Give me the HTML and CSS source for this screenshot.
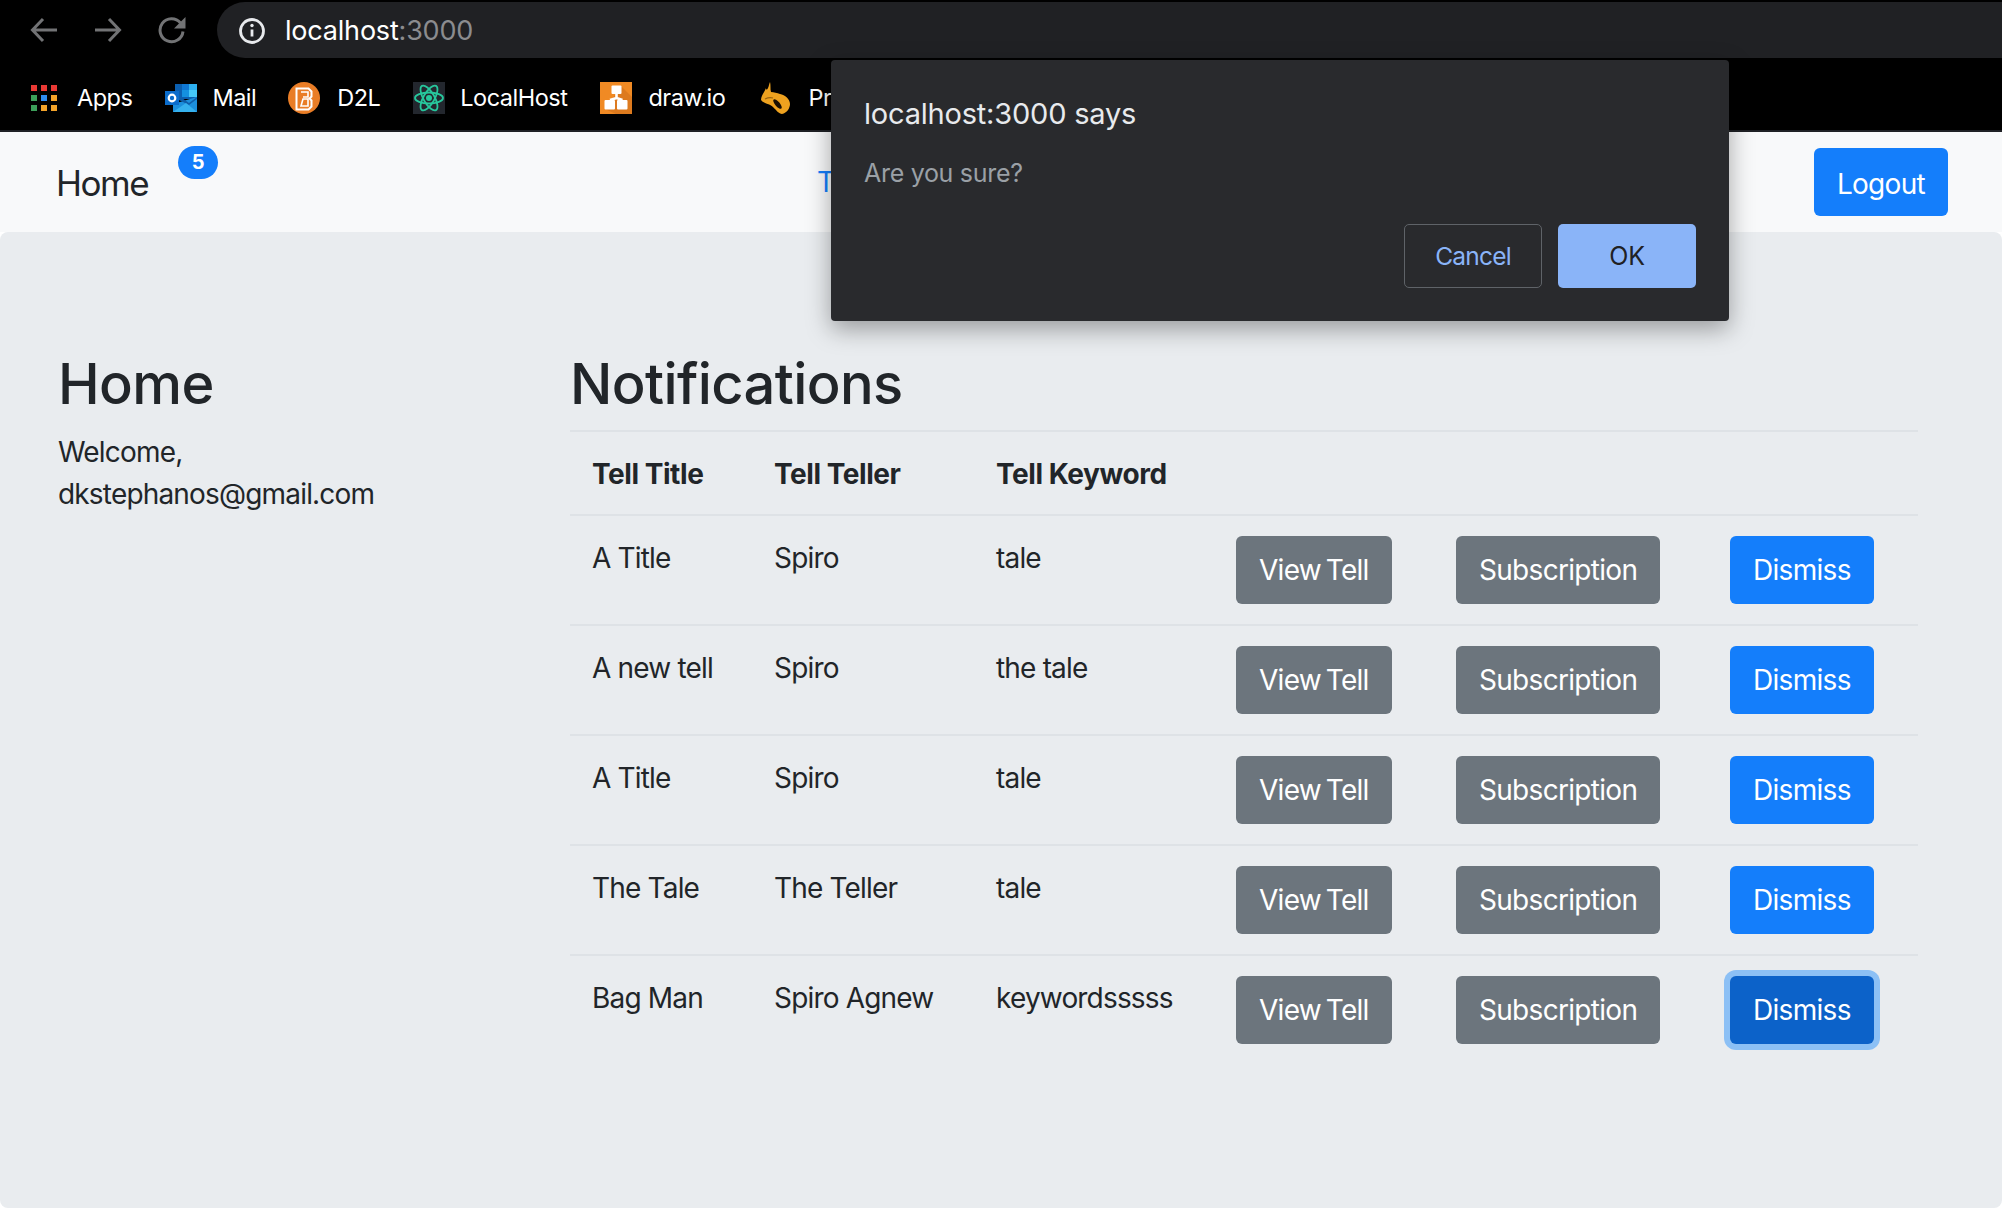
FILE: index.html
```html
<!DOCTYPE html>
<html lang="en">
<head>
    <meta charset="UTF-8">
    <meta name="viewport" content="width=device-width, initial-scale=1.0">
    <title>Home</title>
    <link rel="stylesheet" href="styles.css">
</head>
<body>
    <div class="toolbar">
        <svg class="tool-icon" viewBox="0 0 28 28"><path d="M27 14H3M13 3 2.500 14 13 25"/></svg>
        <svg class="tool-icon" viewBox="0 0 28 28"><path d="M1 14h24M15 3 25.500 14 15 25"/></svg>
        <svg class="tool-icon" viewBox="0 0 28 28"><path d="M22.500 7A11.500 11.500 0 1 0 25 15.500"/><path class="fill" d="M27.500 1v11.500H16z"/></svg>
        <div class="omnibox">
            <svg class="info-icon" viewBox="0 0 28 28"><circle cx="14" cy="14" r="11.500"/><path d="M14 12.500v7"/><circle class="dot" cx="14" cy="8.500" r="1.700"/></svg>
            <span class="url">localhost<span class="url-port">:3000</span></span>
        </div>
    </div>

    <div class="bookmarks">
        <a class="bookmark bm-apps">
            <svg viewBox="0 0 26 27">
                <rect width="6" height="6" fill="#ea3a35"/><rect x="10" width="6" height="6" fill="#ea3a35"/><rect x="20" width="6" height="6" fill="#ea3a35"/>
                <rect y="10" width="6" height="6" fill="#3c9f5a"/><rect x="10" y="10" width="6" height="6" fill="#2f8cef"/><rect x="20" y="10" width="6" height="6" fill="#f3a32a"/>
                <rect y="20" width="6" height="6" fill="#3c9f5a"/><rect x="10" y="20" width="6" height="6" fill="#f3a32a"/><rect x="20" y="20" width="6" height="6" fill="#f3a32a"/>
            </svg>
            Apps
        </a>
        <a class="bookmark bm-mail">
            <svg viewBox="0 0 32 28">
                <rect x="10" width="22" height="15" fill="#0b5fb0"/>
                <rect x="17" width="7" height="6" fill="#0f78d4"/>
                <rect x="24" width="8" height="6" fill="#2db0f0"/>
                <rect x="17" y="6" width="7" height="7" fill="#1490df"/>
                <rect x="24" y="6" width="8" height="7" fill="#45c8f8"/>
                <path d="M8 20 32 13v15H8z" fill="#1c8fdc"/>
                <path d="M10 14h7l7 5 8-6v2l-8 6z" fill="#0f5ea8"/>
                <path d="M8 28 21 19l11 9z" fill="#35b1ee"/>
                <rect y="7" width="14" height="14" fill="#0b6ccb"/>
                <circle cx="7" cy="14" r="3.300" fill="none" stroke="#fff" stroke-width="2.200"/>
            </svg>
            Mail
        </a>
        <a class="bookmark bm-d2l">
            <svg viewBox="0 0 32 32">
                <circle cx="16" cy="16" r="16" fill="#e97d26"/>
                <path d="M8.500 6.500h12l3 3v5l-2 2 2 2v6l-3 3h-12z" fill="none" stroke="#fff" stroke-width="2"/>
                <path d="M13 10h7v5h-5M15 17h5v7h-7z" fill="none" stroke="#fff" stroke-width="1.600"/>
            </svg>
            D2L
        </a>
        <a class="bookmark bm-react">
            <svg viewBox="0 0 32 32">
                <rect width="32" height="32" fill="#23272e"/>
                <g fill="none" stroke="#27c79c" stroke-width="1.800">
                    <ellipse cx="16" cy="16" rx="14" ry="5.500"/>
                    <ellipse cx="16" cy="16" rx="14" ry="5.500" transform="rotate(60 16 16)"/>
                    <ellipse cx="16" cy="16" rx="14" ry="5.500" transform="rotate(120 16 16)"/>
                </g>
                <circle cx="16" cy="16" r="3" fill="#27c79c"/>
            </svg>
            LocalHost
        </a>
        <a class="bookmark bm-draw">
            <svg viewBox="0 0 32 32">
                <rect width="32" height="32" fill="#f08a24"/>
                <path d="M21 4 32 15v17H16L5 27z" fill="#dd7a1e"/>
                <path d="M16.500 11v5L10 18M16.500 16l6 2" fill="none" stroke="#fff" stroke-width="2.600"/>
                <rect x="11.500" y="3.500" width="10" height="8.500" rx="1" fill="#fff"/>
                <rect x="4.500" y="18" width="10.500" height="9.500" rx="1" fill="#fff"/>
                <rect x="17" y="18" width="10.500" height="9.500" rx="1" fill="#fff"/>
            </svg>
            draw.io
        </a>
        <a class="bookmark bm-flame">
            <svg viewBox="0 0 30 32">
                <path d="M9 0c1 4 0 7 1 10 3 0 6 1 9 2 5 1 10 5 10 10 0 4-3 9-8 10-3 0-6-4-9-7-3-3-9-3-12-7 0-4 3-7 5-12 0 2 1 2 2 0s1-4 2-6z" fill="#eea21f"/>
                <ellipse cx="16.500" cy="22" rx="6" ry="2.400" transform="rotate(50 16.500 22)" fill="#1a0f02"/>
                <path d="M4 17c2-1 5-2 8-1" fill="none" stroke="#9a6410" stroke-width="1.200"/>
            </svg>
            Pr
        </a>
    </div>

    <nav class="navbar">
        <a class="brand">Home</a>
        <span class="badge">5</span>
        <a class="nav-link">T</a>
        <button class="btn btn-primary logout">Logout</button>
    </nav>

    <main class="jumbotron">
        <section class="sidebar">
            <h2>Home</h2>
            <p>Welcome,<br>dkstephanos@gmail.com</p>
        </section>
        <section class="notifications">
            <h2>Notifications</h2>
            <table>
                <thead>
                    <tr>
                        <th class="col-title">Tell Title</th>
                        <th class="col-teller">Tell Teller</th>
                        <th class="col-keyword">Tell Keyword</th>
                        <th class="col-view"></th>
                        <th class="col-sub"></th>
                        <th class="col-dismiss"></th>
                    </tr>
                </thead>
                <tbody>
                    <tr>
                        <td>A Title</td>
                        <td>Spiro</td>
                        <td>tale</td>
                        <td><button class="btn btn-secondary">View Tell</button></td>
                        <td><button class="btn btn-secondary">Subscription</button></td>
                        <td><button class="btn btn-primary">Dismiss</button></td>
                    </tr>
                    <tr>
                        <td>A new tell</td>
                        <td>Spiro</td>
                        <td>the tale</td>
                        <td><button class="btn btn-secondary">View Tell</button></td>
                        <td><button class="btn btn-secondary">Subscription</button></td>
                        <td><button class="btn btn-primary">Dismiss</button></td>
                    </tr>
                    <tr>
                        <td>A Title</td>
                        <td>Spiro</td>
                        <td>tale</td>
                        <td><button class="btn btn-secondary">View Tell</button></td>
                        <td><button class="btn btn-secondary">Subscription</button></td>
                        <td><button class="btn btn-primary">Dismiss</button></td>
                    </tr>
                    <tr>
                        <td>The Tale</td>
                        <td>The Teller</td>
                        <td>tale</td>
                        <td><button class="btn btn-secondary">View Tell</button></td>
                        <td><button class="btn btn-secondary">Subscription</button></td>
                        <td><button class="btn btn-primary">Dismiss</button></td>
                    </tr>
                    <tr>
                        <td>Bag Man</td>
                        <td>Spiro Agnew</td>
                        <td>keywordsssss</td>
                        <td><button class="btn btn-secondary">View Tell</button></td>
                        <td><button class="btn btn-secondary">Subscription</button></td>
                        <td><button class="btn btn-primary is-focused">Dismiss</button></td>
                    </tr>
                </tbody>
            </table>
        </section>
    </main>

    <div class="dialog">
        <div class="dialog-title">localhost:3000 says</div>
        <div class="dialog-message">Are you sure?</div>
        <div class="dialog-actions">
            <button class="dialog-btn dialog-cancel">Cancel</button>
            <button class="dialog-btn dialog-ok">OK</button>
        </div>
    </div>
</body>
</html>
```

FILE: styles.css
```css
* {
    box-sizing: border-box;
}

html, body {
    height: 100%;
}

body {
    margin: 0;
    background-color: #fff;
    color: #212529;
    font-family: Inter, "Liberation Sans", sans-serif;
    font-size: 28px;
    line-height: 42px;
    letter-spacing: -0.82px;
    overflow: hidden;
}

/* browser chrome */
.toolbar {
    height: 58px;
    background-color: #000;
    display: flex;
    align-items: center;
    padding: 2px 0 0 30px;
}

.tool-icon {
    width: 28px;
    height: 28px;
    margin-right: 36px;
    fill: none;
    stroke: #727375;
    stroke-width: 3;
}

.tool-icon .fill {
    fill: #727375;
    stroke: none;
}

.omnibox {
    flex: 1;
    height: 56px;
    margin-left: -5px;
    background-color: #202124;
    border-radius: 28px 0 0 28px;
    display: flex;
    align-items: center;
    padding: 2px 0 0 21px;
    color: #fff;
}

.info-icon {
    width: 28px;
    height: 28px;
    margin-right: 19px;
    fill: none;
    stroke: #e8eaed;
    stroke-width: 2.800;
}

.info-icon .dot {
    fill: #e8eaed;
    stroke: none;
}

.url {
    font-size: 27px;
    letter-spacing: -0.2px;
}

.url-port {
    color: #8b8c8f;
}

.bookmarks {
    height: 74px;
    background-color: #000;
    border-bottom: 2px solid #1f2125;
    display: flex;
    align-items: center;
    padding: 8px 0 0 31px;
    color: #fff;
    font-size: 23.500px;
    letter-spacing: -0.5px;
}

.bookmark {
    display: flex;
    align-items: center;
    height: 32px;
    white-space: nowrap;
}

.bookmark svg {
    height: 32px;
    margin-right: 17px;
    flex: none;
}

.bm-apps svg {
    width: 26px;
    height: 27px;
    margin-right: 20px;
}

.bm-apps {
    margin-right: 33px;
}

.bm-mail svg {
    width: 32px;
    height: 28px;
    margin-right: 15px;
}

.bm-mail {
    margin-right: 32px;
}

.bm-d2l svg, .bm-react svg, .bm-draw svg {
    width: 32px;
}

.bm-d2l {
    margin-right: 33px;
}

.bm-react svg {
    margin-right: 15px;
}

.bm-draw svg {
    margin-right: 16px;
}

.bm-react {
    margin-right: 33px;
}

.bm-draw {
    margin-right: 36px;
}

.bm-flame svg {
    width: 30px;
}

/* page */
.navbar {
    height: 100px;
    background-color: #f8f9fa;
    display: flex;
    align-items: center;
    padding-left: 56px;
    position: relative;
}

.brand {
    font-size: 35px;
    letter-spacing: -1.500px;
    margin: 2px 30px 0 0;
}

.badge {
    align-self: flex-start;
    margin-top: 14px;
    width: 40px;
    height: 33px;
    border-radius: 17px;
    background-color: #147efb;
    color: #fff;
    font-size: 20px;
    font-weight: 700;
    letter-spacing: 0;
    line-height: 33px;
    text-align: center;
}

.nav-link {
    margin-left: 599px;
    color: #147efb;
}

.jumbotron {
    height: 976px;
    background-color: #e9ecef;
    border-radius: 8px;
    display: flex;
    padding: 119px 0 0 58px;
}

.sidebar {
    width: 512px;
}

h2 {
    margin: 0 0 12px;
    font-size: 56px;
    font-weight: 500;
    line-height: 67px;
    letter-spacing: -0.6px;
}

.sidebar p {
    margin: 13px 0 0;
}

.notifications {
    width: 1348px;
}

table {
    width: 100%;
    table-layout: fixed;
    border-collapse: collapse;
}

th, td {
    padding: 21px 22px 20px;
    border-top: 2px solid #dee2e6;
    text-align: left;
    vertical-align: top;
}

th {
    padding-bottom: 19px;
    font-weight: 700;
    letter-spacing: -0.45px;
}

td {
    height: 110px;
}

.col-title {
    width: 182px;
}

.col-teller {
    width: 222px;
}

.col-keyword {
    width: 240px;
}

.col-view {
    width: 220px;
}

.col-sub {
    width: 274px;
}

.col-dismiss {
    width: 210px;
}

.btn {
    height: 68px;
    padding: 0 23px;
    border: 0;
    border-radius: 6px;
    color: #fff;
    font-family: inherit;
    font-size: 28px;
    letter-spacing: -0.7px;
    word-spacing: -2.500px;
    white-space: nowrap;
}

td .btn {
    display: block;
    margin-top: -1px;
}

.btn-primary {
    background-color: #147efb;
}

.btn-secondary {
    background-color: #6c757d;
}

.btn-primary.is-focused {
    background-color: #0c62c9;
    box-shadow: 0 0 0 6px #8cc0f5;
}

.btn.logout {
    margin-left: auto;
    margin-right: 54px;
    padding-top: 4px;
}

/* alert dialog */
.dialog {
    position: absolute;
    left: 831px;
    top: 60px;
    width: 898px;
    height: 261px;
    padding: 33px 33px 0;
    background-color: #292a2d;
    border-radius: 4px;
    box-shadow: 0 8px 24px rgba(0, 0, 0, 0.35);
}

.dialog-title {
    color: #e8eaed;
    font-size: 29px;
    line-height: 42px;
    letter-spacing: -0.2px;
}

.dialog-message {
    margin-top: 20px;
    color: #9aa0a6;
    font-size: 25px;
    line-height: 36px;
    letter-spacing: -0.3px;
}

.dialog-actions {
    margin-top: 33px;
    display: flex;
    justify-content: flex-end;
    gap: 16px;
}

.dialog-btn {
    width: 138px;
    height: 64px;
    border-radius: 5px;
    font-family: inherit;
    font-size: 25px;
    letter-spacing: -0.2px;
}

.dialog-cancel {
    background-color: transparent;
    border: 1px solid #5f6368;
    color: #8ab4f8;
    font-size: 24.500px;
    letter-spacing: -0.8px;
}

.dialog-ok {
    background-color: #8ab4f8;
    border: 0;
    color: #202124;
}
```
